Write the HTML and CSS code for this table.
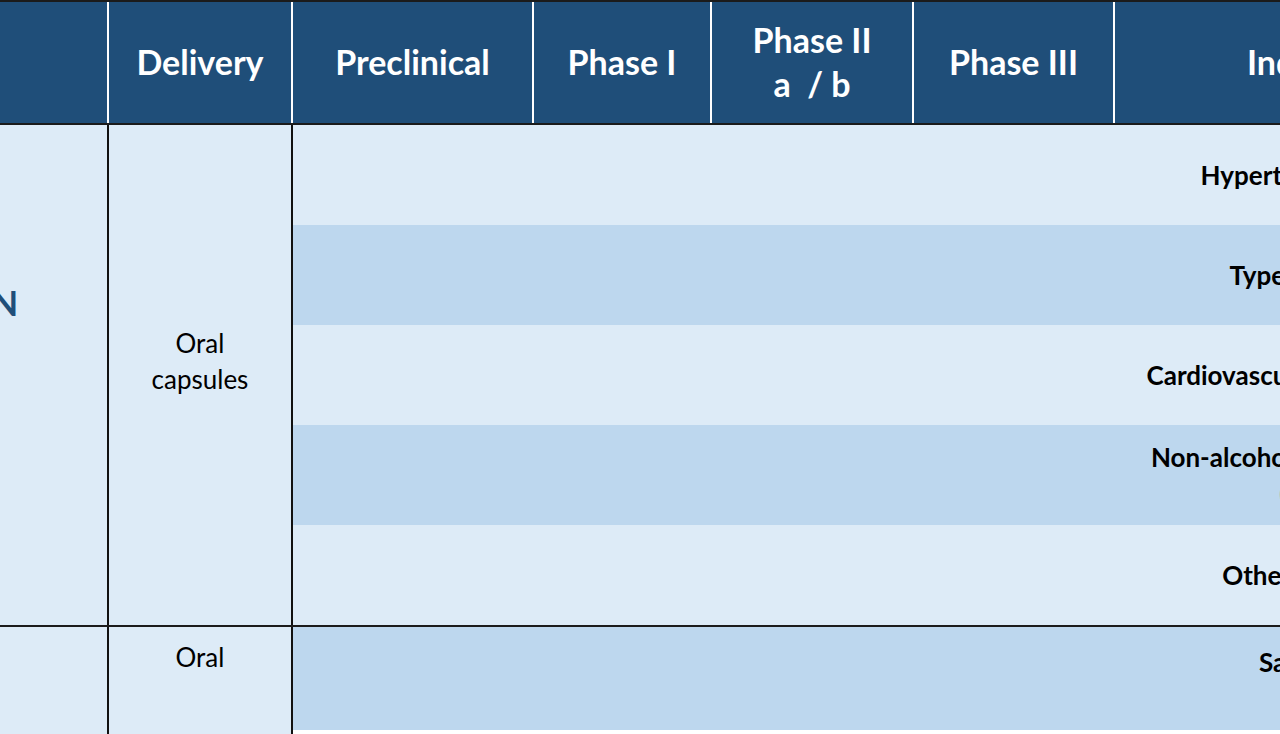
FILE: index.html
```html
<!DOCTYPE html>
<html lang="en">
<head>
<meta charset="utf-8">
<title>Pipeline</title>
<link rel="stylesheet" href="styles.css">
</head>
<body>
<div class="viewport">
  <div class="pipeline">
    <div class="head">
      <div class="hcell"></div>
      <div class="hcell">Delivery</div>
      <div class="hcell">Preclinical</div>
      <div class="hcell">Phase I</div>
      <div class="hcell two">Phase II<br>a&nbsp; / b</div>
      <div class="hcell">Phase III</div>
      <div class="hcell last">Indication</div>
    </div>

    <div class="group g1">
      <div class="program"><span>AMTN</span></div>
      <div class="delivery">Oral<br>capsules</div>
      <div class="strips">
        <div class="strip light"><div class="bars"></div><div class="ind">Hypertension &amp; CKD</div></div>
        <div class="strip mid"><div class="bars"></div><div class="ind">Type 2 Diabetes</div></div>
        <div class="strip light"><div class="bars"></div><div class="ind">Cardiovascular Diseases (CVD)</div></div>
        <div class="strip mid top"><div class="bars"></div><div class="ind">Non-alcoholic Steatohepatitis<br>(NASH)</div></div>
        <div class="strip light"><div class="bars"></div><div class="ind">Other indications</div></div>
      </div>
    </div>

    <div class="group g2">
      <div class="program"></div>
      <div class="delivery toptext">Oral</div>
      <div class="strips">
        <div class="strip mid tall top"><div class="bars"></div><div class="ind">Sarcopenia</div></div>
      </div>
    </div>
  </div>
</div>
</body>
</html>
```

FILE: styles.css
```css
* { box-sizing: border-box; }
html, body { margin: 0; padding: 0; background: #ffffff; }
body { font-family: Lato, "Open Sans", "Noto Sans", sans-serif; color: #000; }

.viewport { width: 1280px; height: 734px; overflow: hidden; }

.pipeline {
  width: 1682px;
  margin-left: -152px;
  border-top: 2px solid #1b1b1b;
}

.head {
  display: grid;
  grid-template-columns: 261px 184px 241px 178px 202px 201px 415px;
  height: 123px;
  background: #1F4E79;
  border-bottom: 2px solid #1b1b1b;
}
.hcell {
  display: flex;
  align-items: center;
  justify-content: center;
  text-align: center;
  color: #fff;
  font-weight: 700;
  font-size: 34px;
  line-height: 44px;
  padding-bottom: 2px;
  border-right: 2px solid #ffffff;
}
.hcell.last { border-right: none; }

.group {
  display: grid;
  grid-template-columns: 261px 184px 1fr;
  border-bottom: 2px solid #1b1b1b;
}

.program {
  background: #DDEBF7;
  border-right: 2px solid #111;
  display: flex;
  align-items: center;
  justify-content: center;
  color: #1F4E79;
  font-weight: 700;
  font-size: 35px;
  padding-bottom: 146px;
  padding-right: 24px;
}
.delivery {
  background: #DDEBF7;
  border-right: 2px solid #111;
  display: flex;
  align-items: center;
  justify-content: center;
  text-align: center;
  font-size: 26px;
  line-height: 36px;
  padding-bottom: 28px;
}
.delivery.toptext { align-items: flex-start; padding: 12px 0 0; }

.strips { display: flex; flex-direction: column; }
.strip {
  display: grid;
  grid-template-columns: 822px 1fr;
  height: 100px;
}
.strip.light { background: #DDEBF7; }
.strip.mid { background: #BDD7EE; }
.strip.tall { height: 103px; }

.ind {
  display: flex;
  align-items: center;
  justify-content: center;
  text-align: center;
  font-weight: 700;
  font-size: 26px;
  line-height: 36px;
  white-space: nowrap;
}
.strip.top .ind { align-items: flex-start; padding-top: 14px; }
.g2 .strip.top .ind { padding-top: 17px; }
```
